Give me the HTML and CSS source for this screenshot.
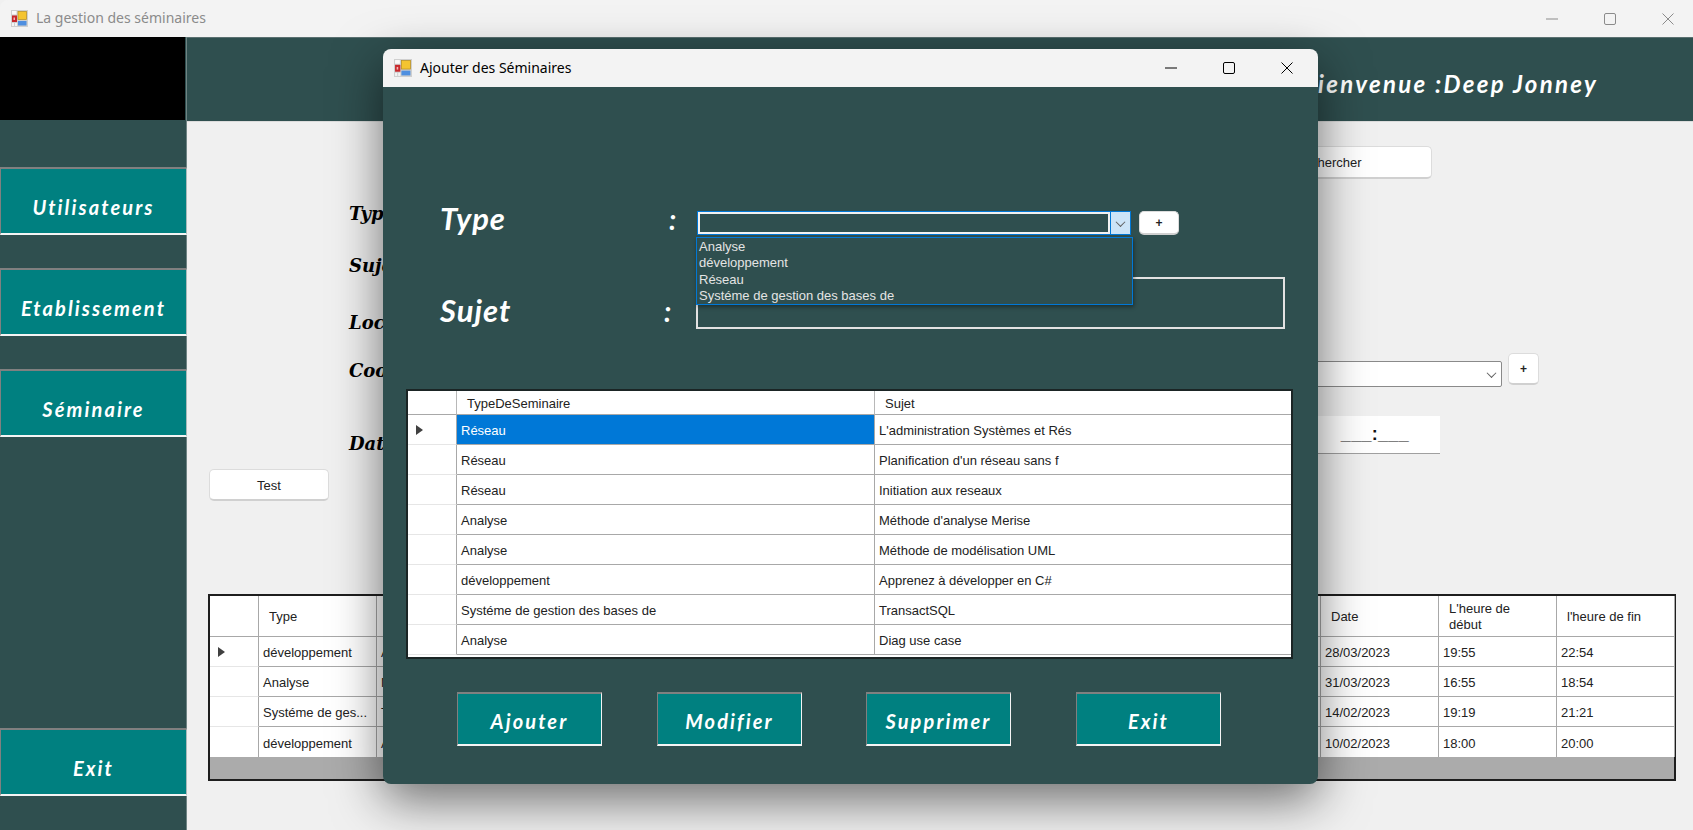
FILE: index.html
```html
<!DOCTYPE html>
<html lang="fr">
<head>
<meta charset="utf-8">
<title>La gestion des séminaires</title>
<link rel="stylesheet" href="styles.css">
</head>
<body>
<svg class="defs" width="0" height="0" aria-hidden="true">
  <symbol id="appicon" viewBox="0 0 17 17">
    <rect width="17" height="17" fill="#cfcfcf"/>
    <rect x="1" y="1" width="4.500" height="3.500" fill="#fafafa"/>
    <rect x="1" y="5.500" width="5" height="6.500" fill="#c8282c"/>
    <rect x="2.500" y="7.500" width="1.500" height="2.500" fill="#f2b8b8"/>
    <rect x="1" y="13" width="2" height="3" fill="#f4f4f4"/>
    <rect x="4" y="13" width="2" height="3" fill="#f4f4f4"/>
    <rect x="7" y="1.500" width="8.500" height="8" fill="#f4c430" stroke="#b98f1c" stroke-width=".7"/>
    <rect x="7" y="11" width="8.500" height="4.500" fill="#4f8fe0"/>
  </symbol>
  <symbol id="win-min" viewBox="0 0 12 12"><path d="M0 6h12" stroke="currentColor" fill="none"/></symbol>
  <symbol id="win-max" viewBox="0 0 12 12"><rect x=".5" y=".5" width="11" height="11" rx="1.500" stroke="currentColor" fill="none"/></symbol>
  <symbol id="win-close" viewBox="0 0 12 12"><path d="M.5.5l11 11M11.500.5l-11 11" stroke="currentColor" fill="none"/></symbol>
</svg>

<div class="app">
  <header class="titlebar titlebar-inactive">
    <svg class="app-icon"><use href="#appicon"/></svg>
    <span class="title-text">La gestion des séminaires</span>
    <div class="win-controls">
      <svg class="win-icon"><use href="#win-min"/></svg>
      <svg class="win-icon"><use href="#win-max"/></svg>
      <svg class="win-icon"><use href="#win-close"/></svg>
    </div>
  </header>

  <div class="main">
    <aside class="sidebar">
      <div class="logo"></div>
      <button class="nav-btn nav-first">Utilisateurs</button>
      <button class="nav-btn nav-next">Etablissement</button>
      <button class="nav-btn nav-next">Séminaire</button>
      <button class="nav-btn nav-exit">Exit</button>
    </aside>

    <div class="content">
      <div class="banner"><span class="welcome">Bienvenue :Deep Jonney</span></div>
      <div class="workspace">
        <div class="search-row"><button class="plain-btn search-btn">Rechercher</button></div>
        <div class="field field-type"><span class="form-label">Type</span></div>
        <div class="field field-sujet"><span class="form-label">Sujet</span></div>
        <div class="field field-local"><span class="form-label">Local</span></div>
        <div class="field field-coord">
          <span class="form-label">Coordinateur</span>
          <div class="bg-combo"><span class="chevron"></span></div>
          <button class="plain-btn small-plus">+</button>
        </div>
        <div class="field field-date">
          <span class="form-label">Date</span>
          <div class="time-box">___:___</div>
        </div>
        <button class="plain-btn test-btn">Test</button>

        <div class="grid-main">
          <table class="dgv dgv-main">
            <colgroup><col class="c-rowhead"><col class="c-118"><col class="c-hidden"><col class="c-118"><col class="c-118"><col class="c-118"></colgroup>
            <thead>
              <tr><th></th><th>Type</th><th>Sujet</th><th>Date</th><th class="wrap">L'heure de<br>début</th><th>l'heure de fin</th></tr>
            </thead>
            <tbody>
              <tr><td class="rowhead"><i class="row-arrow"></i></td><td>développement</td><td>Apprenez</td><td>28/03/2023</td><td>19:55</td><td>22:54</td></tr>
              <tr><td class="rowhead"></td><td>Analyse</td><td>Méthode</td><td>31/03/2023</td><td>16:55</td><td>18:54</td></tr>
              <tr><td class="rowhead"></td><td>Systéme de ges...</td><td>Transact</td><td>14/02/2023</td><td>19:19</td><td>21:21</td></tr>
              <tr><td class="rowhead"></td><td>développement</td><td>Apprenez</td><td>10/02/2023</td><td>18:00</td><td>20:00</td></tr>
            </tbody>
          </table>
        </div>
      </div>
    </div>
  </div>
</div>

<section class="modal">
  <header class="titlebar modal-titlebar">
    <svg class="app-icon modal-icon"><use href="#appicon"/></svg>
    <span class="title-text modal-title">Ajouter des Séminaires</span>
    <div class="win-controls modal-controls">
      <svg class="win-icon"><use href="#win-min"/></svg>
      <svg class="win-icon"><use href="#win-max"/></svg>
      <svg class="win-icon"><use href="#win-close"/></svg>
    </div>
  </header>
  <div class="modal-body">
    <div class="modal-row type-row">
      <span class="modal-label label-type">Type</span>
      <span class="modal-colon colon-type">:</span>
      <div class="combo">
        <div class="combo-text"></div>
        <div class="combo-arrow"><span class="chevron"></span></div>
        <ul class="combo-list">
          <li>Analyse</li>
          <li>développement</li>
          <li>Réseau</li>
          <li>Systéme de gestion des bases de</li>
        </ul>
      </div>
      <button class="plain-btn modal-plus">+</button>
    </div>
    <div class="modal-row sujet-row">
      <span class="modal-label label-sujet">Sujet</span>
      <span class="modal-colon colon-sujet">:</span>
      <div class="sujet-input"></div>
    </div>
    <div class="grid-modal">
      <table class="dgv dgv-modal">
        <colgroup><col class="c-rowhead"><col class="c-type"><col></colgroup>
        <thead><tr><th></th><th>TypeDeSeminaire</th><th>Sujet</th></tr></thead>
        <tbody>
          <tr><td class="rowhead"><i class="row-arrow"></i></td><td class="selected">Réseau</td><td>L'administration Systèmes et Rés</td></tr>
          <tr><td class="rowhead"></td><td>Réseau</td><td>Planification d'un réseau sans f</td></tr>
          <tr><td class="rowhead"></td><td>Réseau</td><td>Initiation aux reseaux</td></tr>
          <tr><td class="rowhead"></td><td>Analyse</td><td>Méthode d'analyse Merise</td></tr>
          <tr><td class="rowhead"></td><td>Analyse</td><td>Méthode de modélisation UML</td></tr>
          <tr><td class="rowhead"></td><td>développement</td><td>Apprenez à développer en C#</td></tr>
          <tr><td class="rowhead"></td><td>Systéme de gestion des bases de</td><td>TransactSQL</td></tr>
          <tr><td class="rowhead"></td><td>Analyse</td><td>Diag use case</td></tr>
        </tbody>
      </table>
    </div>
    <div class="actions">
      <button class="action-btn">Ajouter</button>
      <button class="action-btn gap-a">Modifier</button>
      <button class="action-btn gap-b">Supprimer</button>
      <button class="action-btn gap-c">Exit</button>
    </div>
  </div>
</section>
</body>
</html>
```

FILE: styles.css
```css
* { box-sizing: border-box; }
html, body { margin: 0; height: 100%; }
body {
  width: 1693px;
  height: 830px;
  overflow: hidden;
  position: relative;
  background: #f0f0f0;
  font-family: "Liberation Sans", Arial, sans-serif;
  font-size: 13px;
  color: #222;
}
.defs { position: absolute; }
button { font-family: inherit; cursor: default; }

.app { display: flex; flex-direction: column; height: 830px; }

.titlebar {
  display: flex;
  align-items: center;
  background: #f3f3f3;
  flex: none;
}
.titlebar-inactive { height: 37px; padding-left: 11px; color: #8b8b8b; border-top-left-radius: 8px; }
.app-icon { width: 17px; height: 17px; flex: none; }
.title-text { margin-left: 8px; padding-bottom: 2px; font-family: "Noto Sans", "Open Sans", sans-serif; font-size: 14px; }
.win-controls { margin-left: auto; display: flex; gap: 46px; padding-right: 19px; }
.win-icon { width: 12px; height: 12px; display: block; }

.main { flex: 1; display: flex; min-height: 0; }

.sidebar {
  width: 187px;
  flex: none;
  background: #2f4f4f;
  display: flex;
  flex-direction: column;
  box-shadow: inset -1px 0 0 #6f8484;
}
.logo { width: 185px; height: 83px; background: #000; flex: none; }
.nav-btn {
  height: 68px;
  flex: none;
  background: #008080;
  color: #fff;
  border-style: solid;
  border-width: 2px 1px 2px 1px;
  border-color: #808080 #a9b9b9 #f4f4f4 #808080;
  padding: 12px 0 0;
  font-family: "Lato", sans-serif;
  font-style: italic;
  font-weight: 700;
  font-size: 20px;
  letter-spacing: 2.100px;
}
.nav-first { margin-top: 47px; }
.nav-next { margin-top: 33px; }
.nav-exit { margin-top: 291px; }

.content { flex: 1; display: flex; flex-direction: column; min-width: 0; }
.banner {
  height: 85px;
  flex: none;
  background: #2f4f4f;
  display: flex;
  align-items: center;
  justify-content: flex-end;
  padding: 8px 95px 0 0;
  border-top: 1px solid #5a7070;
  border-bottom: 1px solid #dcdcdc;
}
.welcome {
  color: #fff;
  font-family: "Lato", sans-serif;
  font-style: italic;
  font-weight: 700;
  font-size: 24px;
  letter-spacing: 2.300px;
}

.workspace { flex: 1; padding-top: 24px; display: flex; flex-direction: column; }
.search-row { height: 33px; display: flex; justify-content: flex-end; padding-right: 261px; flex: none; }

.plain-btn {
  background: #fff;
  border: 1px solid #dcdcdc;
  border-bottom: 2px solid #d0d0d0;
  border-radius: 5px;
  color: #222;
  font-size: 13px;
  padding: 1px 0 0;
}
.search-btn { width: 208px; }

.field { display: flex; align-items: center; padding-left: 162px; flex: none; }
.form-label {
  font-family: "DejaVu Serif", serif;
  font-weight: 700;
  font-style: italic;
  font-size: 18px;
  color: #000;
}
.field-type { height: 26px; margin-top: 21px; }
.field-sujet { height: 26px; margin-top: 26px; }
.field-local { height: 26px; margin-top: 31px; padding-top: 1px; }
.field-coord { height: 34px; margin-top: 18px; padding-right: 154px; }
.field-date { height: 38px; margin-top: 29px; padding-right: 253px; align-items: flex-end; justify-content: space-between; }

.bg-combo {
  margin-left: auto;
  width: 500px;
  height: 26px;
  align-self: flex-end;
  background: #fff;
  border: 1px solid #8a8a8a;
  border-radius: 2px;
  display: flex;
  align-items: center;
  justify-content: flex-end;
  padding-right: 6px;
}
.chevron {
  width: 7px;
  height: 7px;
  border-right: 1px solid #606060;
  border-bottom: 1px solid #606060;
  transform: rotate(45deg) translate(-1px, -1px);
}
.small-plus { width: 31px; height: 32px; margin-left: 6px; font-weight: 700; font-size: 12px; align-self: flex-start; }

.time-box {
  width: 220px;
  height: 38px;
  background: #fff;
  border-bottom: 1px solid #a0a0a0;
  text-align: right;
  padding-right: 31px;
  font-size: 18px;
  font-weight: 700;
  line-height: 36px;
  color: #111;
  letter-spacing: .3px;
}

.test-btn { width: 120px; height: 32px; margin: 15px 0 0 22px; flex: none; }

.grid-main {
  margin: 93px 0 0 21px;
  width: 1468px;
  height: 187px;
  background: #ababab;
  border: 2px solid #1e1e1e;
  flex: none;
}

.dgv { border-collapse: separate; border-spacing: 0; table-layout: fixed; background: #fff; }
.dgv th, .dgv td {
  border-right: 1px solid #a8a8a8;
  border-bottom: 1px solid #a8a8a8;
  font-weight: 400;
  text-align: left;
  white-space: nowrap;
  overflow: hidden;
  padding: 2px 0 0 4px;
  color: #222;
}
.dgv th { padding-left: 10px; }
.dgv td.rowhead { border-bottom-color: #e6e6e6; padding: 0; position: relative; }
.dgv td.selected { background: #0078d7; color: #fff; }
.row-arrow {
  position: absolute;
  left: 8px;
  top: 50%;
  margin-top: -5px;
  width: 0;
  height: 0;
  border-left: 7px solid #404040;
  border-top: 5px solid transparent;
  border-bottom: 5px solid transparent;
}

.dgv-main { width: 1464px; }
.dgv-main th { height: 41px; line-height: 16px; }
.dgv-main td { height: 30px; }
.dgv-main tbody tr:last-child td { border-bottom: none; }
.c-rowhead { width: 49px; }
.c-118 { width: 118px; }
.c-hidden { width: 944px; }
.c-type { width: 418px; }

.modal {
  position: absolute;
  left: 383px;
  top: 49px;
  width: 935px;
  height: 735px;
  background: #2f4f4f;
  border-radius: 8px;
  overflow: visible;
  box-shadow: 0 16px 50px rgba(0, 0, 0, .55);
  display: flex;
  flex-direction: column;
}
.modal-titlebar {
  height: 38px;
  padding-left: 11px;
  color: #000;
  border-radius: 8px 8px 0 0;
}
.modal-icon { width: 18px; height: 18px; }
.modal-title { margin-left: 8px; }
.modal-controls { padding-right: 25px; }

.modal-body { flex: 1; position: relative; }
.modal-row { display: flex; align-items: center; padding-left: 57px; }
.modal-label, .modal-colon, .action-btn {
  color: #fff;
  font-family: "Lato", sans-serif;
  font-style: italic;
  font-weight: 700;
}
.modal-label { font-size: 31px; letter-spacing: 1px; }
.modal-colon { font-size: 28px; }
.label-type { width: 229px; padding-bottom: 10px; }
.label-sujet { width: 224px; padding-top: 14px; }
.colon-type { width: 28px; padding-bottom: 8px; }
.colon-sujet { width: 32px; padding-top: 16px; }

.type-row { margin-top: 124px; height: 24px; }
.combo { width: 434px; height: 24px; display: flex; position: relative; border: 1px solid #0078d7; }
.combo-text { flex: 1; border: 2px solid #f2f2f2; }
.combo-arrow {
  width: 20px;
  background: #cce4f7;
  border-left: 1px solid #0078d7;
  display: flex;
  align-items: center;
  justify-content: center;
}
.combo-list {
  position: absolute;
  left: -2px;
  top: 25px;
  width: 437px;
  height: 68px;
  margin: 0;
  padding: 1px 0 0 2px;
  list-style: none;
  background: #2f4f4f;
  border: 1px solid #0078d7;
  box-shadow: 1px 2px 4px rgba(0, 0, 0, .4);
  color: #e4e4e4;
  font-size: 13px;
  line-height: 16.300px;
  z-index: 2;
}
.modal-plus { width: 40px; height: 24px; margin-left: 8px; font-weight: 700; font-size: 12px; }

.sujet-row { margin-top: 42px; height: 52px; }
.sujet-input { width: 589px; height: 52px; border: 2px solid #e2e2e2; }

.grid-modal {
  margin: 60px 0 0 23px;
  width: 887px;
  height: 270px;
  background: #fff;
  border: 2px solid #1b2525;
}
.dgv-modal { width: 883px; }
.dgv-modal th { height: 24px; border-right-color: #b8b8b8; }
.dgv-modal td { height: 30px; }
.dgv-modal tr > :last-child { border-right: none; }

.actions { margin: 33px 0 0 74px; display: flex; }
.action-btn {
  width: 145px;
  height: 54px;
  background: #008080;
  border-style: solid;
  border-width: 2px 1px 2px 1px;
  border-color: #808080 #f4f4f4 #f4f4f4 #808080;
  padding: 4px 0 0;
  font-size: 20px;
  letter-spacing: 2.100px;
}
.gap-a { margin-left: 55px; }
.gap-b { margin-left: 64px; }
.gap-c { margin-left: 65px; }
```
